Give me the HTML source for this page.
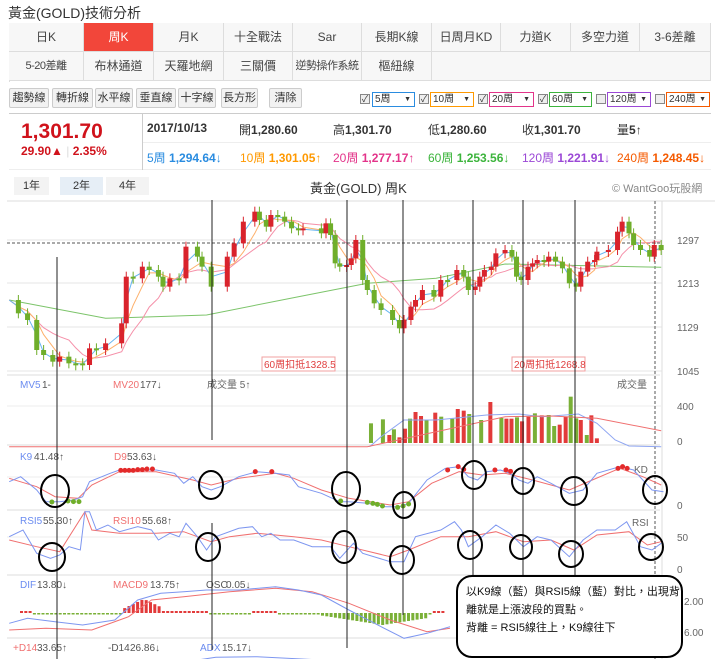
<!DOCTYPE html><html><head><meta charset="utf-8"><style>
*{margin:0;padding:0;box-sizing:border-box}
body{width:720px;height:659px;background:#fff;position:relative;overflow:hidden;font-family:"Liberation Sans","Noto Sans CJK TC",sans-serif;color:#333}
.a{position:absolute;white-space:nowrap}
.tab{position:absolute;height:29px;border-right:1px solid #ddd;border-bottom:1px solid #ddd;background:#f7f7f7;font-size:12px;text-align:center;line-height:29px;color:#444;white-space:nowrap;overflow:hidden}
.btn{position:absolute;top:88px;height:20px;border:1px solid #ccc;background:#f2f2f2;font-size:11px;text-align:center;line-height:18px;border-radius:2px}
.sel{position:absolute;top:92px;height:15px;border:1px solid;font-size:10px;line-height:13px;padding-left:2px;background:#fff}
.sel:after{content:"▼";position:absolute;right:3px;font-size:7px}
.cb{position:absolute;top:94px;width:10px;height:10px;border:1px solid #888;font-size:9px;line-height:8px;text-align:center;background:#eee}
.i{font-size:12px;font-weight:bold;top:121px}
.m{font-size:12px;top:149px}
</style></head><body>
<div class="a" style="left:8px;top:3px;font-size:14px">黃金(GOLD)技術分析</div>
<div class="a" style="left:9px;top:23px;width:702px;height:59px;border:1px solid #ddd;border-right:none;border-bottom:none"></div>
<div id="tabs"></div>
<div class="btn" style="left:9px;width:40px">趨勢線</div>
<div class="btn" style="left:52px;width:41px">轉折線</div>
<div class="btn" style="left:95px;width:38px">水平線</div>
<div class="btn" style="left:136px;width:40px">垂直線</div>
<div class="btn" style="left:178px;width:38px">十字線</div>
<div class="btn" style="left:221px;width:37px">長方形</div>
<div class="btn" style="left:269px;width:33px">清除</div>
<div class="cb" style="left:360px">✓</div><div class="sel" style="left:372px;width:43px;border-color:#2a8ce0">5周</div>
<div class="cb" style="left:419px">✓</div><div class="sel" style="left:430px;width:44px;border-color:#f90">10周</div>
<div class="cb" style="left:478px">✓</div><div class="sel" style="left:489px;width:45px;border-color:#e3348a">20周</div>
<div class="cb" style="left:538px">✓</div><div class="sel" style="left:549px;width:43px;border-color:#3cb43c">60周</div>
<div class="cb" style="left:596px"></div><div class="sel" style="left:607px;width:44px;border-color:#9b48d6">120周</div>
<div class="cb" style="left:655px"></div><div class="sel" style="left:666px;width:44px;border-color:#f55a00">240周</div>
<div class="a" style="left:9px;top:113px;width:702px;height:57px;border-top:1px solid #ccc;border-bottom:1px solid #eee"></div>
<div class="a" style="left:142px;top:113px;width:1px;height:57px;background:#ccc"></div>
<div class="a" style="left:143px;top:142px;width:568px;height:1px;background:#eee"></div>
<div class="a" style="left:21px;top:120px;font-size:21px;font-weight:bold;color:#d0121b">1,301.70</div>
<div class="a" style="left:21px;top:144px;font-size:12px;font-weight:bold;color:#d0121b">29.90▲ <span style="color:#ddd;font-weight:normal">|</span> 2.35%</div>
<div class="a i" style="left:147px">2017/10/13</div>
<div class="a i" style="left:239px"><span style="font-weight:normal">開</span>1,280.60</div>
<div class="a i" style="left:333px"><span style="font-weight:normal">高</span>1,301.70</div>
<div class="a i" style="left:428px"><span style="font-weight:normal">低</span>1,280.60</div>
<div class="a i" style="left:522px"><span style="font-weight:normal">收</span>1,301.70</div>
<div class="a i" style="left:617px"><span style="font-weight:normal">量</span>5↑</div>
<div class="a m" style="left:147px;color:#2a8ce0">5周 <b>1,294.64</b>↓</div>
<div class="a m" style="left:240px;color:#f90">10周 <b>1,301.05</b>↑</div>
<div class="a m" style="left:333px;color:#e3348a">20周 <b>1,277.17</b>↑</div>
<div class="a m" style="left:428px;color:#3cb43c">60周 <b>1,253.56</b>↓</div>
<div class="a m" style="left:522px;color:#9b48d6">120周 <b>1,221.91</b>↓</div>
<div class="a m" style="left:617px;color:#f55a00">240周 <b>1,248.45</b>↓</div>
<div class="a" style="left:14px;top:177px;width:35px;height:18px;background:#f3f3f3;font-size:11px;text-align:center;line-height:18px">1年</div>
<div class="a" style="left:60px;top:177px;width:43px;height:18px;background:#e6eef6;font-size:11px;text-align:center;line-height:18px">2年</div>
<div class="a" style="left:106px;top:177px;width:43px;height:18px;background:#f3f3f3;font-size:11px;text-align:center;line-height:18px">4年</div>
<div class="a" style="left:310px;top:178px;font-size:13px">黃金(GOLD) 周K</div>
<div class="a" style="left:612px;top:180px;font-size:11px;color:#888">© WantGoo玩股網</div>
<svg id="s" class="a" style="left:0;top:0" width="720" height="659" font-family="Liberation Sans,Noto Sans CJK TC,sans-serif"></svg>
<div class="a" style="left:456px;top:575px;width:227px;height:83px;border:2px solid #000;border-radius:16px;background:#fff;font-size:11px;line-height:18px;padding:6px 0 0 8px;color:#111">以K9線（藍）與RSI5線（藍）對比，出現背<br>離就是上漲波段的買點。<br>背離 = RSI5線往上，K9線往下</div>
<script>
var T=[["日K",9,75],["周K",84,70],["月K",154,70],["十全戰法",224,69],["Sar",293,69],["長期K線",362,70],["日周月KD",432,69],["力道K",501,70],["多空力道",571,69],["3-6差離",640,71]];
var T2=[["5-20差離",9,75],["布林通道",84,70],["天羅地網",154,70],["三關價",224,69],["逆勢操作系統",293,69],["樞紐線",362,70]];
var h="";T.forEach(function(t,i){h+='<div class="tab" style="left:'+t[1]+'px;top:23px;width:'+t[2]+'px;'+(i==1?'background:#f2463a;color:#fff':'')+'">'+t[0]+'</div>'});
T2.forEach(function(t){h+='<div class="tab" style="left:'+t[1]+'px;top:52px;width:'+t[2]+'px;'+(t[0].length>5?'font-size:11px;letter-spacing:-0.5px':'')+'">'+t[0]+'</div>'});
h+='<div class="tab" style="left:432px;top:52px;width:279px;background:#f7f7f7"></div>';
document.getElementById("tabs").innerHTML=h;
var S="";function P(a,c,o,w){var s=a.map(function(p){return (p[0]/2.178).toFixed(1)+","+(p[1]/3+o).toFixed(1)}).join(" ");S+='<polyline points="'+s+'" fill="none" stroke="'+c+'" stroke-width="'+(w||1)+'"/>'}
function L(x1,y1,x2,y2,c,d){S+='<line x1="'+x1+'" y1="'+y1+'" x2="'+x2+'" y2="'+y2+'" stroke="'+c+'"'+(d?' stroke-dasharray="'+d+'"':'')+'/>'}
function Tx(x,y,t,c,s){S+='<text x="'+x+'" y="'+y+'" fill="'+(c||"#666")+'" font-size="'+(s||10)+'">'+t+'</text>'}
L(7,201,715,201,"#ddd");L(7,375,660,375,"#ddd");L(7,445,660,445,"#ddd");L(7,510,660,510,"#ddd");L(7,575,660,575,"#ddd");L(7,638,660,638,"#ddd");
[240,283,327,371].forEach(function(y){L(7,y,662,y,"#e6e6e6")});L(662,201,662,659,"#ddd");
L(7,406,662,406,"#eee");L(7,477,662,477,"#eee");L(7,537,662,537,"#eee");
Tx(677,244,"1297");Tx(677,287,"1213");Tx(677,331,"1129");Tx(677,375,"1045");Tx(677,410,"400");Tx(677,445,"0");Tx(677,509,"0");Tx(677,541,"50");Tx(677,573,"0");Tx(684,605,"2.00");Tx(684,636,"6.00");
L(7,243,662,243,"#555","3,2");L(655,201,655,659,"#555","3,2");
var C=[[20,330],[40,370],[60,390],[80,480],[95,495],[115,515],[130,500],[150,520],[165,520],[180,525],[195,475],[210,480],[230,460],[265,400],[275,260],[290,265],[310,230],[325,240],[345,260],[355,290],[370,265],[390,265],[405,170],[430,200],[440,230],[460,290],[495,200],[510,160],[530,95],[555,65],[565,90],[580,110],[590,75],[605,80],[620,95],[635,115],[650,120],[660,115],[700,130],[710,100],[720,135],[730,220],[740,230],[755,225],[765,205],[775,150],[790,270],[800,300],[815,340],[830,360],[855,390],[870,415],[880,390],[895,350],[905,330],[920,300],[945,320],[960,270],[975,270],[995,240],[1010,260],[1020,300],[1035,290],[1045,260],[1055,240],[1070,230],[1080,190],[1100,180],[1115,200],[1125,260],[1135,270],[1150,230],[1160,220],[1170,210],[1185,215],[1195,200],[1210,215],[1225,235],[1240,280],[1255,290],[1265,245],[1280,215],[1295,210],[1300,185],[1325,180],[1345,125],[1355,95],[1370,130],[1380,165],[1395,180],[1415,200],[1425,165],[1440,180]];
function ma(n){return C.map(function(p,i){var s=0,k=0;for(var j=Math.max(0,i-n+1);j<=i;j++){s+=C[j][1];k++}return [p[0],s/k]})}
P([[20,330],[230,385],[450,375],[650,320],[800,280],[950,265],[1100,222],[1440,232]],"#7cc46a",190);
P(ma(8),"#f58fa8",190);P(ma(4),"#fdb06b",190);P(ma(2),"#65b5f0",190);
for(var i=1;i<C.length;i++){var x=C[i][0]/2.178,y0=C[i-1][1]/3+190,y1=C[i][1]/3+190,up=y1<y0,c=up?"#d9232c":"#6fae2a",t=Math.min(y0,y1),b=Math.max(y0,y1);if(b-t<2)b=t+2;L(x,t-5,x,b+5,c);S+='<rect x="'+(x-2.5)+'" y="'+t+'" width="5" height="'+(b-t)+'" fill="'+c+'"/>'}
S+='<rect x="262" y="357" width="73" height="14" fill="#fff" stroke="#f2a0a0"/><rect x="512" y="357" width="73" height="14" fill="#fff" stroke="#f2a0a0"/>';
Tx(264,368,"60周扣抵1328.5","#e04040");Tx(514,368,"20周扣抵1268.8","#e04040");
Tx(20,388,"MV5","#6b8cf0");Tx(42,388,"1-","#555");Tx(113,388,"MV20","#f07070");Tx(140,388,"177↓","#555");Tx(207,388,"成交量 5↑","#666");Tx(617,388,"成交量","#666");
var v=[[808,700],[834,688],[848,735],[858,718],[870,742],[882,716],[893,686],[905,666],[917,678],[929,690],[948,668],[961,680],[985,686],[997,657],[1010,662],[1022,672],[1048,690],[1068,636],[1092,684],[1103,686],[1114,686],[1126,682],[1137,694],[1151,680],[1165,670],[1180,676],[1195,675],[1207,708],[1219,704],[1232,680],[1243,620],[1255,685],[1265,690],[1278,735],[1288,676],[1300,745],[1325,770]];
v.forEach(function(b,i){var x=b[0]/2.178,y=b[1]/3+190;S+='<rect x="'+(x-2)+'" y="'+y+'" width="4" height="'+(443-y)+'" fill="'+(i%3==0||i%5==1?"#7ab037":"#e23a3a")+'"/>'});
P([[805,770],[830,740],[880,690],[950,690],[1060,675],[1130,672],[1180,680],[1260,672],[1300,700],[1340,750],[1370,768],[1440,770]],"#8fa6f2",190);
P([[20,770],[800,770],[900,740],[1000,710],[1100,680],[1200,678],[1300,685],[1440,722]],"#f07070",190);
Tx(20,460,"K9","#6b8cf0");Tx(34,460,"41.48↑","#555");Tx(114,460,"D9","#f07070");Tx(127,460,"53.63↓","#555");Tx(634,473,"KD","#666");
P([[20,115],[80,140],[120,170],[170,175],[200,135],[260,95],[340,95],[420,120],[460,135],[520,115],[600,100],[640,115],[700,150],[760,175],[850,195],[890,185],[940,130],[1000,95],[1050,105],[1100,100],[1160,120],[1240,150],[1290,120],[1350,85],[1400,110],[1440,135]],"#f07070",440);
P([[20,125],[45,110],[80,150],[100,185],[130,185],[160,180],[180,170],[195,125],[240,100],[260,90],[340,90],[380,100],[400,130],[420,110],[440,140],[460,150],[480,140],[520,110],[560,95],[600,100],[630,105],[650,140],[700,160],[740,185],[760,185],[800,190],[840,200],[870,200],[890,190],[930,120],[970,85],[1000,80],[1020,110],[1040,120],[1060,95],[1090,90],[1110,100],[1130,120],[1150,130],[1170,110],[1200,130],[1240,160],[1270,150],[1300,100],[1350,80],[1380,90],[1400,120],[1420,150],[1445,155]],"#7d96f0",440);
[[263,91],[272,91],[281,91],[290,91],[300,89],[310,89],[320,87],[332,87],[556,95],[592,95],[975,90],[998,80],[1010,88],[1078,90],[1102,90],[1112,94],[1346,85],[1356,80],[1366,85]].forEach(function(p){S+='<circle cx="'+p[0]/2.178+'" cy="'+(p[1]/3+440)+'" r="2.5" fill="#e32a2a"/>'});
[[113,186],[148,183],[160,185],[172,185],[742,183],[800,187],[812,190],[822,193],[833,198],[866,202],[878,198],[890,192]].forEach(function(p){S+='<circle cx="'+p[0]/2.178+'" cy="'+(p[1]/3+440)+'" r="2.5" fill="#6fae2a"/>'});
Tx(20,524,"RSI5","#6b8cf0");Tx(43,524,"55.30↑","#555");Tx(113,524,"RSI10","#f07070");Tx(142,524,"55.68↑","#555");Tx(632,526,"RSI","#666");
P([[20,300],[80,320],[130,335],[185,215],[200,270],[260,280],[340,280],[400,275],[460,305],[500,290],[560,280],[640,290],[700,300],[760,320],[850,350],[890,330],[960,290],[1020,290],[1080,275],[1140,305],[1200,300],[1250,330],[1300,285],[1370,275],[1410,315],[1440,305]],"#f07070",440);
P([[20,290],[50,270],[80,340],[110,355],[130,345],[150,320],[175,330],[185,215],[195,215],[210,270],[235,255],[260,275],[300,260],[330,270],[345,300],[370,280],[390,290],[405,250],[430,290],[450,330],[470,290],[520,265],[550,260],[570,290],[590,280],[610,300],[640,300],[680,320],[720,320],[740,355],[770,310],[790,340],[850,365],[880,365],[905,290],[960,270],[990,245],[1005,270],[1020,320],[1050,290],[1080,255],[1110,280],[1140,320],[1170,290],[1200,300],[1240,350],[1270,300],[1300,270],[1340,270],[1365,245],[1395,320],[1420,330],[1440,310]],"#7d96f0",440);
Tx(20,588,"DIF","#6b8cf0");Tx(37,588,"13.80↓","#555");Tx(113,588,"MACD9","#f07070");Tx(150,588,"13.75↑","#555");Tx(206,588,"OSC","#555");Tx(226,588,"0.05↓","#555");
for(var x=20;x<445;x+=4.3){var zx=x*2.178,hgt=0;if(zx>260&&zx<350)hgt=-(1-Math.abs(zx-310)/55)*12-2;else if(zx<70||(zx>350&&zx<450)||(zx>540&&zx<600)||(zx>940))hgt=-2;else if(zx>690&&zx<930)hgt=(1-Math.abs(zx-830)/140)*10+2;else hgt=1.5;
S+='<rect x="'+x+'" y="'+(hgt<0?613+hgt:613)+'" width="3" height="'+Math.abs(hgt)+'" fill="'+(hgt<0?"#e23a3a":"#7ab037")+'"/>'}
P([[20,570],[100,565],[200,570],[280,530],[330,480],[400,470],[500,455],[600,445],[680,455],[760,490],[850,540],[930,575],[980,565]],"#f07070",440);
P([[20,550],[60,535],[120,545],[180,555],[250,540],[300,480],[350,460],[400,455],[450,450],[520,450],[600,440],[650,450],[700,465],[760,510],[830,560],[880,595],[930,580],[980,560]],"#7d96f0",440);
Tx(13,651,"+D14","#f07070");Tx(37,651,"33.65↑","#555");Tx(108,651,"-D14","#555");Tx(130,651,"26.86↓","#555");Tx(200,651,"ADX","#6b8cf0");Tx(222,651,"15.17↓","#555");
P([[420,662],[470,652],[560,650],[700,660]],"#7d96f0",440);
[[57,257,659],[212,200,440],[347,200,648],[403,200,615],[473,200,575],[523,200,575],[575,200,575],[212,523,650]].forEach(function(l){L(l[0],l[1],l[0],l[2],"#222")});
[[55,491,14,16],[211,485,12,14],[346,489,14,17],[404,505,11,13],[474,475,12,14],[523,481,11,13],[574,491,13,14],[655,490,12,14],[52,557,13,14],[208,547,12,14],[344,547,12,16],[402,560,12,14],[470,545,12,14],[521,547,11,12],[571,554,12,13],[651,547,12,13]].forEach(function(c){S+='<ellipse cx="'+c[0]+'" cy="'+c[1]+'" rx="'+c[2]+'" ry="'+c[3]+'" fill="none" stroke="#000" stroke-width="2"/>'});
document.getElementById("s").innerHTML=S;
</script></body></html>
